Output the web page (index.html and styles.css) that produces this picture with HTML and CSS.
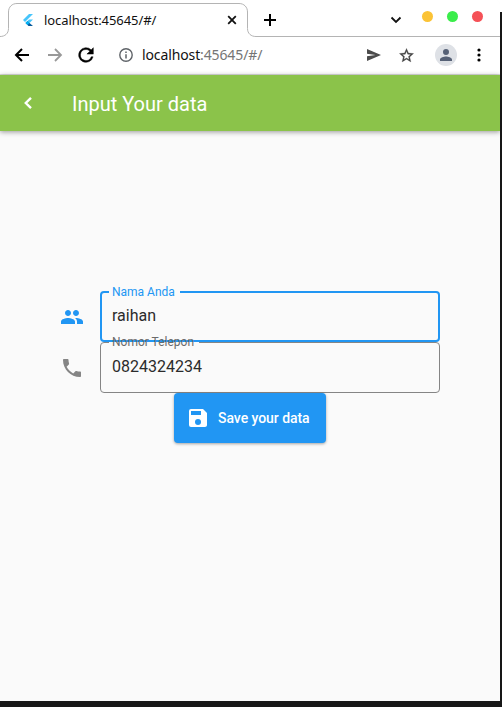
FILE: index.html
```html
<!DOCTYPE html>
<html lang="id">
<head>
<meta charset="utf-8">
<title>Input Your data</title>
<link rel="stylesheet" href="styles.css">
</head>
<body>
<div class="window">
  <header class="tabs">
    <svg class="tab-outline" width="500" height="37" viewBox="0 0 500 37"><path d="M0 36.500c5 0 8.500-3 8.500-8V12c0-5 3.500-8.500 8.500-8.500h222c5 0 8.500 3.500 8.500 8.500v16.500c0 5 3.500 8 8.500 8h244" fill="none" stroke="#b4b4b4"/></svg>
    <div class="tab">
      <svg class="logo" width="10" height="12" viewBox="0 0 10 12"><path d="M6 0h4L2 8 0 6z" fill="#47c5fb"/><path d="M6 5.500h4L6.500 9 4.500 7z" fill="#47c5fb"/><path d="M4.500 7 2.500 9l3 3H10L6.500 9z" fill="#075b9d"/><path d="m4.500 7 2 2-2 2-2-2z" fill="#00b5f8"/></svg>
      <span class="tab-title">localhost:45645/#/</span>
      <svg class="close" width="10" height="10" viewBox="0 0 10 10"><path d="m1.200 1.200 7.600 7.600m0-7.600L1.200 8.800" stroke="#111" stroke-width="1.800"/></svg>
    </div>
    <svg class="plus" width="12" height="12" viewBox="0 0 12 12"><path d="M0 6h12M6 0v12" stroke="#000" stroke-width="2"/></svg>
    <svg class="chevron" width="12" height="8" viewBox="0 0 12 8"><path d="m1.500 1.500 4.500 4.500 4.500-4.500" fill="none" stroke="#111" stroke-width="1.800"/></svg>
    <div class="controls"><i class="min"></i><i class="max"></i><i class="quit"></i></div>
  </header>
  <nav class="toolbar">
    <svg class="back" width="16" height="16" viewBox="0 0 16 16"><path d="M15 8H2m6-6L2 8l6 6" fill="none" stroke="#000" stroke-width="2"/></svg>
    <svg class="forward" width="16" height="16" viewBox="0 0 16 16"><path d="M1 8h13M8 2l6 6-6 6" fill="none" stroke="#999" stroke-width="1.800"/></svg>
    <svg class="reload" width="22" height="22" viewBox="0 0 24 24"><path d="M17.650 6.350A8 8 0 1 0 19.730 14h-2.080A6 6 0 1 1 12 6c1.660 0 3.140.69 4.220 1.780L13 11h7V4z" fill="#000" stroke="#000" stroke-width=".5"/></svg>
    <svg class="info" width="14" height="14" viewBox="0 0 14 14"><circle cx="7" cy="7" r="6.200" fill="none" stroke="#5f6368" stroke-width="1.400"/><path d="M7 6.200v4.300M7 3.500v1.500" stroke="#5f6368" stroke-width="1.500"/></svg>
    <span class="url">localhost<span class="port">:45645/#/</span></span>
    <svg class="send" width="14" height="12" viewBox="0 0 14 12"><path d="M0 0v4.700L8.500 6 0 7.300V12l14-6z" fill="#4c4c4c"/></svg>
    <svg class="star" width="17" height="17" viewBox="0 0 24 24"><path d="m22 9.240-7.190-.62L12 2 9.190 8.630 2 9.240l5.460 4.730L5.820 21 12 17.270 18.180 21l-1.630-7.030zM12 15.400l-3.760 2.270 1-4.280-3.320-2.880 4.380-.38L12 6.100l1.710 4.040 4.380.38-3.320 2.880 1 4.280z" fill="#444" stroke="#444" stroke-width=".4"/></svg>
    <span class="avatar"><svg width="18" height="18" viewBox="0 0 24 24"><path d="M12 12a4 4 0 1 0 0-8 4 4 0 0 0 0 8zm0 2c-2.670 0-8 1.340-8 4v2h16v-2c0-2.660-5.330-4-8-4z" fill="#566176"/></svg></span>
    <svg class="more" width="4" height="14" viewBox="0 0 4 14"><g fill="#000"><circle cx="2" cy="2" r="1.600"/><circle cx="2" cy="7" r="1.600"/><circle cx="2" cy="12" r="1.600"/></g></svg>
  </nav>
  <div class="appbar">
    <svg class="app-back" width="8" height="12" viewBox="0 0 8 12"><path d="M7 .9 1.800 6 7 11.100" fill="none" stroke="#fff" stroke-width="2.400"/></svg>
    <h1>Input Your data</h1>
  </div>
  <main>
    <div class="row focused">
      <svg width="24" height="24" viewBox="0 0 24 24"><path d="M16 11c1.660 0 2.990-1.340 2.990-3S17.660 5 16 5s-3 1.340-3 3 1.340 3 3 3zm-8 0c1.660 0 2.990-1.340 2.990-3S9.660 5 8 5 5 6.340 5 8s1.340 3 3 3zm0 2c-2.330 0-7 1.170-7 3.500V19h14v-2.500C15 14.170 10.330 13 8 13zm8 0c-.29 0-.62.02-.97.05 1.160.84 1.970 1.970 1.970 3.450V19h6v-2.500c0-2.330-4.670-3.500-7-3.500z" fill="currentColor"/></svg>
      <fieldset><legend>Nama Anda</legend><div class="value">raihan</div></fieldset>
    </div>
    <div class="row">
      <svg width="24" height="24" viewBox="0 0 24 24"><path d="M6.620 10.790c1.440 2.830 3.760 5.140 6.590 6.590l2.200-2.200c.27-.27.67-.36 1.020-.24 1.120.37 2.330.57 3.570.57.550 0 1 .45 1 1V20c0 .55-.45 1-1 1C10.610 21 3 13.390 3 4c0-.55.45-1 1-1h3.500c.55 0 1 .45 1 1 0 1.250.2 2.450.57 3.570.11.35.03.74-.25 1.020z" fill="currentColor"/></svg>
      <fieldset><legend>Nomor Telepon</legend><div class="value">0824324234</div></fieldset>
    </div>
    <button class="save"><svg width="24" height="24" viewBox="0 0 24 24"><path d="M17 3H5a2 2 0 0 0-2 2v14a2 2 0 0 0 2 2h14c1.100 0 2-.9 2-2V7zm-5 16a3 3 0 1 1 0-6 3 3 0 0 1 0 6zm3-10H5V5h10z" fill="#fff"/></svg>Save your data</button>
  </main>
</div>
</body>
</html>
```
FILE: styles.css
```css
* { box-sizing: border-box; }
body { margin: 0; background: linear-gradient(#fff 12px, #171717 12px); height: 707px; overflow: hidden; font-family: Roboto, sans-serif; }
svg { display: block; flex: none; }
.window { width: 500px; height: 701px; background: #fafafa; display: flex; flex-direction: column; border-top-right-radius: 5px; overflow: hidden; }
.tabs { position: relative; height: 37px; flex: none; display: flex; align-items: center; background: #fff; padding-top: 3px; }
.tab-outline { position: absolute; left: 0; top: 0; }
.tab { width: 229px; margin-left: 8px; padding-left: 15px; display: flex; align-items: center; }
.tab-title { margin-left: 11px; flex: 1; font: 13px/20px "Noto Sans", sans-serif; color: #111; white-space: nowrap; letter-spacing: -.08px; }
.plus { margin-left: 27px; }
.chevron { margin-left: 114px; }
.controls { display: flex; gap: 14px; margin: -7px 0 0 20px; }
.controls i { width: 11px; height: 11px; border-radius: 50%; }
.min { background: #fbc336; }
.max { background: #3bed4b; }
.quit { background: #f55157; }
.toolbar { height: 38px; flex: none; display: flex; align-items: center; background: #fff; border-bottom: 1px solid #dedede; padding: 0 0 1px 14px; }
.forward { margin-left: 17px; }
.reload { margin-left: 12px; }
.info { margin-left: 22px; }
.url { margin-left: 9px; width: 225px; font: 14px/20px "Noto Sans", sans-serif; color: #111; letter-spacing: -.12px; }
.port { color: #757575; }
.star { margin-left: 17px; }
.avatar { width: 22px; height: 22px; margin-left: 20px; border-radius: 50%; background: #dee1e6; display: grid; place-items: center; }
.more { margin-left: 20px; }
.appbar { height: 56px; flex: none; background: #8bc34a; color: #fff; display: flex; align-items: center; padding-left: 24px; box-shadow: 0 1px 5px rgba(0,0,0,.4); }
h1 { margin: 2px 0 0 40px; font-size: 20px; line-height: 24px; font-weight: 400; }
main { padding: 160px 60px 0; display: flex; flex-direction: column; }
.row { display: flex; align-items: center; height: 51px; color: #858585; }
.focused { color: #2196f3; }
fieldset { margin: -6px 0 0 16px; height: 57px; flex: 1; min-width: 0; padding: 0 11px 0 8px; border: 1px solid #858585; border-radius: 4px; }
legend { font-size: 12px; line-height: 13px; padding: 0 5px 0 3px; color: #6b6b6b; }
.value { font-size: 16px; line-height: 20px; color: #2b2b2b; padding: 8px 0 0 3px; }
.focused fieldset { border: 2px solid #2196f3; padding-left: 7px; }
.focused legend { line-height: 14px; color: #2196f3; }
.focused .value { padding-top: 7px; }
.save { align-self: center; width: 152px; height: 50px; border: 0; border-radius: 4px; padding: 0 0 0 12px; display: flex; align-items: center; gap: 8px; background: #2196f3; color: #fff; font: 500 14px/20px Roboto, sans-serif; letter-spacing: -.05px; box-shadow: 0 1px 3px rgba(0,0,0,.35); white-space: nowrap; }
```
